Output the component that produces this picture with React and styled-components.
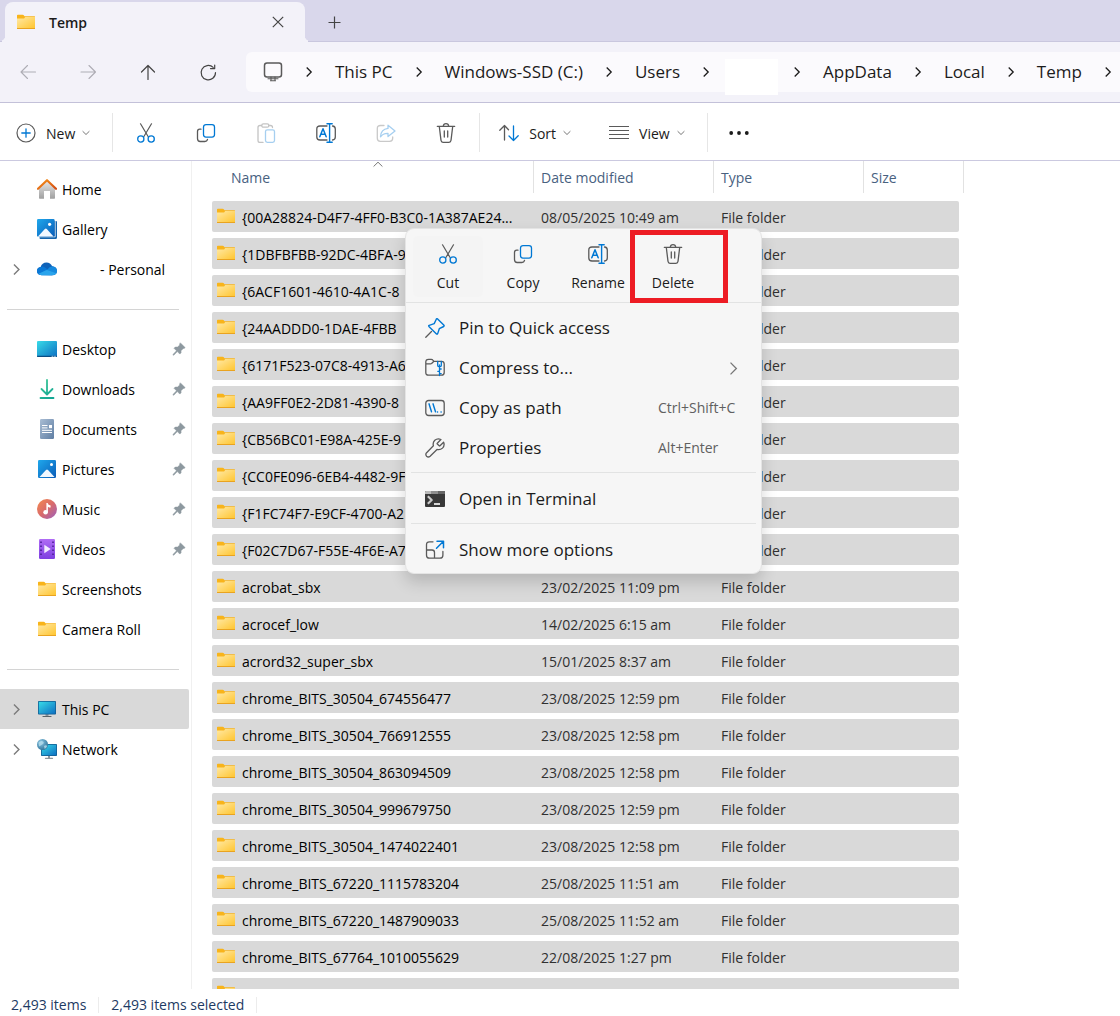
// src/App.jsx
import React, { useState } from 'react';
import styled, { createGlobalStyle, css } from 'styled-components';

const GlobalStyle = createGlobalStyle`
  * {
    box-sizing: border-box;
  }
  body {
    margin: 0;
    background: #fff;
    color: #1b1b1b;
    font-family: 'Open Sans', 'Noto Sans', sans-serif;
    font-size: 14px;
    line-height: 20px;
  }
  button {
    border: 0;
    padding: 0;
    background: none;
    color: inherit;
    font: inherit;
  }
  svg {
    display: block;
    flex: none;
  }
`;

const GREY = '#5a5a5a';
const BLUE = '#0078d4';

/* ---------- icons ---------- */

const Svg = ({ size = 20, children }) => (
  <svg width={size} height={size} viewBox={`0 0 ${size} ${size}`} fill="none" strokeWidth="1.3" strokeLinecap="round" strokeLinejoin="round" aria-hidden="true">
    {children}
  </svg>
);

const FolderIcon = () => (
  <Svg>
    <path d="M1 3.5q0-.8.8-.8h4.8q.5 0 .9.4l1.1 1.1h10q.4 0 .4.5V8H1z" fill="#f8b41b" />
    <path d="M1 6.4h6.6q.5 0 .9-.5l.7-.9h9.8v11.3H1z" fill="url(#folder)" />
    <path d="M1 16h18v.9H1.5q-.5 0-.5-.5z" fill="#e9a320" />
  </Svg>
);

const HomeIcon = () => (
  <Svg>
    <path d="M2 9.5 10 2l8 7.5V19q0 .7-.7.7H13V12H7v7.7H2.7Q2 19.7 2 19z" fill="url(#homeWall)" />
    <path d="m1 9.8 9-8.6 9 8.6" stroke="url(#homeRoof)" strokeWidth="2.2" />
  </Svg>
);

const GalleryIcon = () => (
  <Svg>
    <path d="M2.5 16.5h14.6V2h1.9q1 0 1 1v15.5q0 1.5-1.5 1.5H3.5q-1 0-1-1z" fill="#1464ad" />
    <path d="M18.2 1v16.8H2" stroke="#fff" strokeWidth=".8" />
    <rect width="17.6" height="17.6" rx="1.2" fill="url(#photo)" />
    <path d="M1 17.4 7.8 10q1-1 2 0l6.7 7.4z" fill="#f2f8ff" />
    <circle cx="12.6" cy="5.3" r="1.6" fill="#fff" />
  </Svg>
);

const CloudIcon = () => (
  <Svg>
    <path d="M4.5 16Q0 15.6 0 11.9 0 8.5 3.6 8 5 3.4 9.5 3.4q4 0 5.7 3.8Q19.4 7.6 20 11.4q0 4.6-4.6 4.8z" fill="#0f62b8" />
    <path d="M3.6 8q2-1 4.4.4l8 6.1-1 1.7H4.5Q0 15.6 0 11.9 0 8.5 3.6 8z" fill="#0a78d6" />
    <path d="M10 11q2.5-3.7 5.2-3.8 4.3.4 4.8 4.4 0 1.8-1 3z" fill="#1589de" />
    <path d="M1.5 14.7 9 11.3q1-.4 2 0l8.5 2.9q-1.1 2-4.1 2H4.5q-1.9-.2-3-1.5z" fill="#2aa4ec" />
  </Svg>
);

const DesktopIcon = () => (
  <Svg>
    <rect y="2" width="20" height="16" rx="1" fill="url(#screen)" />
    <path d="M0 16.7h20v.5q0 .8-.8.8H.8q-.8 0-.8-.8z" fill="#0b4d83" />
    <path d="M15 17.3h1M17.5 17.3h1" stroke="#cde9f8" strokeWidth=".8" />
  </Svg>
);

const DownloadIcon = () => (
  <Svg>
    <path d="M10 1v14M4.5 10 10 15.5 15.5 10M3.5 19h13" stroke="url(#download)" strokeWidth="1.8" />
  </Svg>
);

const DocumentIcon = () => (
  <Svg>
    <rect x="3" width="14" height="20" rx="1.2" fill="url(#doc)" />
    <path d="M5 6.5h5.5M5 8.9h5.5M5 11.3h10M5 13.5h10" stroke="#fff" strokeWidth="1" strokeLinecap="butt" />
    <path d="M12 6h3v3.2h-3z" fill="#fff" />
  </Svg>
);

const PicturesIcon = () => (
  <Svg>
    <rect x="1" y="1" width="18" height="18" rx="1.2" fill="url(#photo)" />
    <path d="M2.5 18 9 11q1-1 2 0l6.5 7z" fill="#f2f8ff" />
    <circle cx="14.5" cy="5.5" r="1.5" fill="#fff" />
  </Svg>
);

const MusicIcon = () => (
  <Svg>
    <circle cx="10" cy="10" r="10" fill="url(#music)" />
    <circle cx="8.6" cy="13.2" r="2.3" fill="#fff" />
    <path d="M9.4 4h1.2q.5 2 3 2.6v2q-1.6 0-2.7-.9v5.5H9.4z" fill="#fff" />
  </Svg>
);

const VideosIcon = () => (
  <Svg>
    <rect x="2" width="16" height="20" rx="1.2" fill="url(#video)" />
    <path d="M4 2.5v16M16 2.5v16" stroke="#4b1f94" strokeWidth="1.6" strokeDasharray="1.6 2.4" strokeLinecap="butt" />
    <path d="M7.3 5.8v8.4l6.4-4.2z" fill="#f3ecff" />
  </Svg>
);

const PcIcon = () => (
  <Svg>
    <path d="M8.5 15h3v2.5h-3z" fill="#8b959c" />
    <rect x="1" y="2" width="18" height="13.5" rx=".8" fill="#125f94" />
    <rect x="1.8" y="2.8" width="16.4" height="11.9" fill="url(#screen)" />
    <path d="M6 17.5h8" stroke="#5a6269" strokeWidth="1.2" />
  </Svg>
);

const NetworkIcon = () => (
  <Svg>
    <rect x="4" y="5" width="16" height="12" rx=".8" fill="#125f94" />
    <rect x="4.8" y="5.8" width="14.4" height="10.4" fill="url(#screen)" />
    <path d="M11 17h2v2h-2z" fill="#8b959c" />
    <path d="M8.5 19.3h7" stroke="#8b959c" />
    <circle cx="5.5" cy="5.5" r="5.5" fill="url(#globe)" />
    <path d="M1.5 3.5Q4 1 6 2.5T4.5 6 2 7.5zM7 7q2-1.5 3.3 0-.8 2.2-2.6 3z" fill="#b5dcec" opacity=".8" />
  </Svg>
);

const PinnedIcon = () => (
  <Svg size={14}>
    <path d="m8.5 1 4.6 4.6-1 .9-.8-.1-2.3 2.4.1 2-1.3 1.3-2.5-2.5L2 13l-1 .2.2-1L4.5 8.8 2 6.3 3.3 5l2.2.1L7.7 3V2z" fill="#8d989f" stroke="#8d989f" strokeWidth=".5" />
  </Svg>
);

const MonitorIcon = () => (
  <Svg>
    <rect x="1.5" y="1" width="17" height="14" rx="2.5" stroke={GREY} strokeWidth="1.5" />
    <path d="M8 15v3M12 15v3M5 16.7h10M7.5 18.7h5" stroke={GREY} strokeWidth="1.1" />
  </Svg>
);

const BackIcon = () => <Svg><path d="M17.5 10h-14M9.5 3.5 3 10l6.5 6.5" stroke="currentColor" strokeWidth="1.1" /></Svg>;
const ForwardIcon = () => <Svg><path d="M3 10h14M11 3.5 17.5 10 11 16.5" stroke="currentColor" strokeWidth="1.1" /></Svg>;
const UpIcon = () => <Svg><path d="M10 17.5v-14M3.5 10 10 3.5 16.5 10" stroke="currentColor" strokeWidth="1.2" /></Svg>;

const RefreshIcon = () => (
  <Svg>
    <path d="M17.5 10.5a7.2 7.2 0 1 1-2.3-5.1M16.7 3v3.6h-4.2" stroke="currentColor" strokeWidth="1.2" />
  </Svg>
);

const ChevronRight = ({ size = 10, thin }) => (
  <svg width={size} height={size} viewBox="0 0 10 10" fill="none" stroke="currentColor" strokeWidth={thin ? 1 : 1.3} aria-hidden="true">
    <path d="m2.7.5 4.5 4.5-4.5 4.5" />
  </svg>
);

const ChevronDown = () => (
  <svg width="8" height="8" viewBox="0 0 8 8" fill="none" stroke="#777" strokeWidth="1" aria-hidden="true">
    <path d="m.6 2.2 3.4 3.3 3.4-3.3" />
  </svg>
);

const NewIcon = () => (
  <Svg>
    <circle cx="10" cy="10" r="9" stroke={GREY} strokeWidth="1.2" />
    <path d="M10 5.8v8.4M5.8 10h8.4" stroke={BLUE} />
  </Svg>
);

const CutIcon = () => (
  <Svg>
    <path d="M4.5.8 12.4 14M15.5.8 7.6 14" stroke={GREY} strokeWidth="1.2" />
    <circle cx="4.8" cy="16" r="3.1" stroke={BLUE} />
    <circle cx="15.2" cy="16" r="3.1" stroke={BLUE} />
  </Svg>
);

const CopyIcon = () => (
  <Svg>
    <path d="M5 6.2H3.7Q1.5 6.2 1.5 8.5v7q0 3 2.7 3h4.6q2.2 0 2.7-2" stroke={GREY} />
    <rect x="7.5" y="1.6" width="11" height="12.5" rx="2.5" stroke={BLUE} />
  </Svg>
);

const PasteIcon = () => (
  <Svg>
    <path d="M5.5 2.5H4Q2 2.5 2 4.5v13q0 2 2 2h3M13 2.5h1.5q2 0 2 2" stroke="#c4c4c4" />
    <rect x="5.8" y=".8" width="7" height="3.4" rx="1.5" stroke="#c4c4c4" />
    <rect x="9.5" y="6.8" width="9" height="12.5" rx="1.8" stroke="#a6cff0" />
  </Svg>
);

const RenameIcon = () => (
  <Svg>
    <path d="M11 3H4Q.8 3 .8 6v8q0 3 3.2 3h7M16.5 3Q19.3 3.2 19.3 6v8q0 2.8-2.8 3" stroke={GREY} />
    <path d="M13.6.8v18.4M11 .8h5.2M11 19.2h5.2" stroke={BLUE} strokeWidth="1.4" />
    <path d="m3.8 13.8 3.2-8 3.2 8M4.9 11.2h4.2" stroke={BLUE} strokeWidth="1.5" />
  </Svg>
);

const ShareIcon = () => (
  <Svg>
    <path d="M8 2.5H4.5Q1.3 2.5 1.3 5.5v9.8q0 3 3 3h9.4q3 0 3-3V14" stroke="#c9c9c9" />
    <path d="M12 2.2 19 8l-7 5.5v-3.2q-5-.2-7.5 3.5.3-7.5 7.5-8.4z" stroke="#a6cff0" />
  </Svg>
);

const TrashIcon = () => (
  <Svg>
    <path d="M1.3 3.3h17.4M3.3 3.5 5 17.3q.2 2 2 2h6q1.8 0 2-2L16.7 3.5M7.3 3q.2-2.3 2.7-2.3T12.7 3M8.3 8v6M11.7 8v6" stroke={GREY} />
  </Svg>
);

const SortIcon = () => (
  <Svg>
    <path d="M5.5 17V2.5M.8 7.2l4.7-4.7 4 4.2" stroke={GREY} />
    <path d="M14.5 3v14.5M10 13l4.5 4.5 4.7-4.7" stroke={BLUE} />
  </Svg>
);

const ViewIcon = () => (
  <Svg>
    <path d="M0 3.5h20M0 7.5h20M0 11.5h20M0 15.5h20" stroke={GREY} strokeWidth="1.2" strokeLinecap="butt" />
  </Svg>
);

const MoreIcon = () => (
  <Svg>
    <circle cx="2.2" cy="10" r="1.9" fill="#1b1b1b" />
    <circle cx="10" cy="10" r="1.9" fill="#1b1b1b" />
    <circle cx="17.8" cy="10" r="1.9" fill="#1b1b1b" />
  </Svg>
);

const PinIcon = () => (
  <Svg>
    <path d="M6.5 13.5.8 19.2" stroke={GREY} />
    <path d="M12.6.9 19 7.3q.5.7-.3 1.2l-4.4 2.2-1.6 4.9q-.4 1-1.2.3L3.9 8.4q-.6-.8.3-1.1l5-1.7L11.3 1.2q.5-.9 1.3-.3z" stroke={BLUE} strokeWidth="1.4" />
  </Svg>
);

const ZipIcon = () => (
  <Svg>
    <path d="M8.5 3.3h8q2.7 0 2.7 2.7v8.5q0 2.7-2.7 2.7h-13q-2.7 0-2.7-2.7V4Q.8 1.3 3.5 1.3h2.8q1 0 1.6.8l1 1.200L6.600 5.500q-.4.3-1 .3H.9" stroke={GREY} />
    <path d="M14.5 7v10.5M12.7 3.5v4q0 1.2 1.8 1.2t1.8-1.2v-4M14.5 11h1.7M12.8 13.3h1.7M14.5 15.6h1.7" stroke={BLUE} />
  </Svg>
);

const PathIcon = () => (
  <Svg>
    <rect x=".8" y="2.5" width="18.4" height="15" rx="2.8" stroke={GREY} />
    <path d="m4 5.8 2.5 8M8 5.8l2.5 8M12.4 14h.2M16 14h.2" stroke={BLUE} strokeWidth="1.4" />
  </Svg>
);

const WrenchIcon = () => (
  <Svg>
    <path d="M18.6 4.2 15 7.8q-.4.4-.8 0L12.3 6q-.4-.4 0-.8l3.6-3.7Q12.5 0 9.8 2.3 7.5 4.6 8.4 7.8L1.6 14.7q-1.5 1.8 0 3.5 1.7 1.6 3.5 0l6.9-6.7q3.2.8 5.5-1.4 2.5-2.6 1.1-5.9z" stroke={GREY} />
  </Svg>
);

const TerminalIcon = () => (
  <Svg>
    <path d="M0 3q0-1 1-1h18q1 0 1 1v14q0 1-1 1H1q-1 0-1-1z" fill="#383838" />
    <path d="M0 3q0-1 1-1h5v3H0z" fill="#b9b9b9" />
    <path d="M6 2h7v3H6z" fill="#8e8e8e" />
    <path d="M13 2h6q1 0 1 1v2h-7z" fill="#666" />
    <path d="m2.8 7.3 3.9 3.7-3.9 3.7" stroke="#ccc" strokeWidth="2.2" strokeLinecap="butt" />
    <path d="M9 15h6" stroke="#fff" strokeWidth="1.6" strokeLinecap="butt" />
  </Svg>
);

const ShowMoreIcon = () => (
  <Svg>
    <path d="M8 1.8H4.5q-3 0-3 3v10.4q0 3 3 3h10.4q3 0 3-3V11.5M1.5 10H7q2.5 0 2.5 2.5v5.7" stroke={GREY} />
    <path d="M12 1.3h6.5v6.5M18 1.8l-6.5 6.5" stroke={BLUE} strokeWidth="1.5" />
  </Svg>
);

const Gradients = () => (
  <svg width="0" height="0" style={{ position: 'absolute' }} aria-hidden="true">
    <defs>
      <linearGradient id="folder" x1="0" y1="0" x2="1" y2="1"><stop stopColor="#ffe9a6" /><stop offset="1" stopColor="#ffc52f" /></linearGradient>
      <linearGradient id="homeWall" x1="0" y1="0" x2="0" y2="1"><stop stopColor="#e8e8e8" /><stop offset="1" stopColor="#9f9f9f" /></linearGradient>
      <linearGradient id="homeRoof" x1="0" y1="0" x2="1" y2="1"><stop stopColor="#f7941b" /><stop offset="1" stopColor="#d24a12" /></linearGradient>
      <linearGradient id="photo" x1="0" y1="0" x2="1" y2="1"><stop stopColor="#1fa8ec" /><stop offset="1" stopColor="#0a5cb8" /></linearGradient>
      <linearGradient id="screen" x1="0" y1="0" x2="1" y2="1"><stop stopColor="#38dbe8" /><stop offset="1" stopColor="#0d6fc2" /></linearGradient>
      <linearGradient id="download" gradientUnits="userSpaceOnUse" x1="4" y1="1" x2="16" y2="19"><stop stopColor="#3cc796" /><stop offset="1" stopColor="#11a594" /></linearGradient>
      <linearGradient id="doc" x1="0" y1="0" x2="1" y2="1"><stop stopColor="#a9bdd4" /><stop offset="1" stopColor="#5f7ea3" /></linearGradient>
      <linearGradient id="music" x1="0" y1="0" x2="1" y2="1"><stop stopColor="#f58a4e" /><stop offset=".5" stopColor="#d96b6b" /><stop offset="1" stopColor="#9a5fc0" /></linearGradient>
      <linearGradient id="video" x1="0" y1="0" x2="0" y2="1"><stop stopColor="#b06cf5" /><stop offset="1" stopColor="#7d3fe0" /></linearGradient>
      <radialGradient id="globe" cx=".35" cy=".3" r=".8"><stop stopColor="#8cc8e4" /><stop offset="1" stopColor="#2a6d94" /></radialGradient>
    </defs>
  </svg>
);

/* ---------- window chrome ---------- */

const Window = styled.div`
  display: flex;
  flex-direction: column;
  height: 100vh;
  overflow: hidden;
`;

const TabBar = styled.header`
  display: flex;
  align-items: flex-end;
  height: 42px;
  padding-left: 5px;
  background: #d9d7eb;
  border-bottom: 1px solid #c9c7de;
`;

const Tab = styled.div`
  position: relative;
  display: flex;
  align-items: center;
  width: 300px;
  height: 40px;
  margin-bottom: -1px;
  padding: 0 17px 0 11px;
  background: #f3f2f9;
  border-radius: 8px 8px 0 0;
  font-weight: 600;

  &::before,
  &::after {
    content: '';
    position: absolute;
    bottom: 1px;
    width: 5px;
    height: 5px;
  }
  &::before {
    right: 100%;
    border-bottom-right-radius: 5px;
    box-shadow: 2px 2px 0 #f3f2f9;
  }
  &::after {
    left: 100%;
    border-bottom-left-radius: 5px;
    box-shadow: -2px 2px 0 #f3f2f9;
  }
`;

const TabTitle = styled.span`
  flex: 1;
  margin-left: 13px;
  padding-top: 2px;
`;

const TabButton = styled.button`
  display: grid;
  place-items: center;
  width: 20px;
  height: 20px;
  color: #444;
`;

const NewTabButton = styled(TabButton)`
  width: 58px;
  height: 38px;
`;

const AddressRow = styled.div`
  display: flex;
  align-items: center;
  height: 61px;
  background: #f3f2f9;
  border-bottom: 1px solid #c3c1d9;
`;

const NavButtons = styled.div`
  display: flex;
  flex: none;
  gap: 20px;
  padding: 0 18px 0 8px;
`;

const IconButton = styled.button`
  display: grid;
  place-items: center;
  width: 40px;
  height: 40px;
  color: ${(p) => (p.$muted ? '#aeadb5' : '#444')};
`;

const Breadcrumbs = styled.nav`
  display: flex;
  flex: 1;
  align-items: center;
  gap: 21px;
  min-width: 0;
  height: 40px;
  padding-left: 17px;
  background: #fbfafd;
  border-radius: 6px 0 0 6px;
  white-space: nowrap;
  font-size: 17px;
  line-height: 24px;
`;

const Crumb = styled.a`
  color: #1b1b1b;
  text-decoration: none;
`;

const BlankCrumb = styled.span`
  align-self: flex-end;
  flex: none;
  width: 53px;
  height: 36px;
  margin: 0 -7px -3px;
  background: #fff;
`;

const Toolbar = styled.div`
  display: flex;
  align-items: center;
  height: 58px;
  padding-top: 2px;
  border-bottom: 1px solid #cbc9e0;
`;

const ToolGroup = styled.div`
  display: flex;
  align-items: center;
  gap: ${(p) => p.$gap || 0}px;
  height: 39px;
  padding: ${(p) => p.$padding};
  border-right: ${(p) => (p.$last ? '0' : '1px solid #e6e6e6')};
`;

const LabelButton = styled.button`
  display: flex;
  align-items: center;
  gap: 10px;

  svg:last-child {
    margin-left: -3px;
  }
`;

const ToolLabel = styled.span`
  padding-top: 2px;
`;

/* ---------- sidebar ---------- */

const Body = styled.div`
  position: relative;
  display: flex;
  flex: 1;
  min-height: 0;
`;

const Sidebar = styled.nav`
  flex: none;
  width: 192px;
  padding-top: 8px;
  border-right: 1px solid #f0f0f0;
`;

const SideLink = styled.a`
  display: flex;
  align-items: center;
  gap: 5px;
  height: 40px;
  margin-right: 2px;
  padding-right: 3px;
  color: #000;
  text-decoration: none;
  border-radius: 0 2px 2px 0;
  background: ${(p) => (p.$active ? '#d9d9d9' : 'none')};
`;

const Expander = styled.span`
  display: grid;
  flex: none;
  place-items: center;
  width: 32px;
  color: #7c7c7c;
`;

const SideLabel = styled.span`
  flex: 1;
  padding-top: 2px;
  padding-left: ${(p) => (p.$indent ? 38 : 0)}px;
  white-space: nowrap;
`;

const SideRule = styled.hr`
  margin: 20px 12px 19px 7px;
  border: 0;
  border-top: 1px solid #d4d4d4;
`;

/* ---------- file list ---------- */

const Content = styled.main`
  flex: 1;
  min-width: 0;
  padding-left: 20px;
  overflow: hidden;
`;

const FileTable = styled.table`
  display: block;
`;

const TableHead = styled.thead`
  display: block;
  margin-bottom: 8px;
`;

const TableBody = styled.tbody`
  display: grid;
  gap: 6px;
`;

const columns = css`
  display: grid;
  grid-template-columns: 322px 180px 150px 100px;
  align-items: center;
`;

const HeadRow = styled.tr`
  ${columns}
`;

const HeadCell = styled.th`
  position: relative;
  height: 32px;
  padding: 1px 0 0 ${(p) => (p.$first ? 19 : 7)}px;
  border-right: 1px solid #e2e2e2;
  color: #48617f;
  font-weight: 400;
  line-height: 32px;
  text-align: left;
`;

const SortMark = styled.svg`
  position: absolute;
  top: 0;
  left: 161px;
`;

const FileRow = styled.tr`
  ${columns}
  width: 747px;
  height: 31px;
  background: #d9d9d9;
  border-radius: 2px;
`;

const FileCell = styled.td`
  padding: 2px 0 0 7px;
  color: #303030;
  white-space: nowrap;
`;

const NameCell = styled(FileCell)`
  display: flex;
  align-items: flex-start;
  gap: 6px;
  height: 22px;
  padding: 0 0 0 4px;
  color: #000;

  span {
    padding-top: 2px;
  }
`;

/* ---------- context menu ---------- */

const Menu = styled.div`
  position: absolute;
  top: 67px;
  left: 405px;
  width: 357px;
  padding-bottom: 3px;
  background: #f6f6f6;
  border: 1px solid #e4e4e4;
  border-radius: 9px;
  box-shadow: 0 8px 16px rgba(0, 0, 0, 0.16);
`;

const MenuActions = styled.div`
  display: flex;
  gap: 5px;
  padding: 7px 0 5px 7px;
  border-bottom: 1px solid #e2e3e3;
  margin-bottom: 5px;
`;

const MenuAction = styled.button`
  position: relative;
  display: flex;
  flex-direction: column;
  align-items: center;
  gap: 9px;
  width: 70px;
  height: 61px;
  padding-top: 8px;
  border-radius: 5px;
  background: ${(p) => (p.$hover ? '#f4f4f4' : 'none')};
`;

const Highlight = styled.span`
  position: absolute;
  top: -6px;
  left: -8px;
  width: 98px;
  height: 73px;
  border: 5px solid #ed1c24;
`;

const MenuItem = styled.button`
  display: flex;
  align-items: center;
  gap: 14px;
  width: 100%;
  height: 40px;
  padding: 0 19px;
  font-size: 17px;
  text-align: left;
  white-space: nowrap;
`;

const MenuLabel = styled.span`
  flex: 1;
`;

const Shortcut = styled.span`
  width: 84px;
  color: #606060;
  font-size: 14px;
`;

const MenuArrow = styled.span`
  margin-right: 2px;
  color: #777;
`;

const MenuRule = styled.hr`
  margin: 4px 5px 6px;
  border: 0;
  border-top: 1px solid #e2e3e3;
`;

/* ---------- status bar ---------- */

const StatusBar = styled.footer`
  display: flex;
  flex: none;
  align-items: center;
  height: 27px;
  padding: 4px 0 0 11px;
  color: #1d3a63;
`;

const StatusText = styled.span`
  height: 16px;
  margin-right: 12px;
  padding-right: 12px;
  border-right: 1px solid #ececec;
  line-height: 16px;
`;

/* ---------- data ---------- */

const crumbsBefore = ['This PC', 'Windows-SSD (C:)', 'Users'];
const crumbsAfter = ['AppData', 'Local', 'Temp'];

const places = [
  { label: 'Home', Icon: HomeIcon },
  { label: 'Gallery', Icon: GalleryIcon },
  { label: '- Personal', Icon: CloudIcon, expand: true, indent: true },
];

const folders = [
  { label: 'Desktop', Icon: DesktopIcon, pinned: true },
  { label: 'Downloads', Icon: DownloadIcon, pinned: true },
  { label: 'Documents', Icon: DocumentIcon, pinned: true },
  { label: 'Pictures', Icon: PicturesIcon, pinned: true },
  { label: 'Music', Icon: MusicIcon, pinned: true },
  { label: 'Videos', Icon: VideosIcon, pinned: true },
  { label: 'Screenshots', Icon: FolderIcon },
  { label: 'Camera Roll', Icon: FolderIcon },
];

const devices = [
  { label: 'This PC', Icon: PcIcon, expand: true },
  { label: 'Network', Icon: NetworkIcon, expand: true },
];

const files = [
  { name: '{00A28824-D4F7-4FF0-B3C0-1A387AE24...', modified: '08/05/2025 10:49 am' },
  { name: '{1DBFBFBB-92DC-4BFA-9' },
  { name: '{6ACF1601-4610-4A1C-8' },
  { name: '{24AADDD0-1DAE-4FBB' },
  { name: '{6171F523-07C8-4913-A6' },
  { name: '{AA9FF0E2-2D81-4390-8' },
  { name: '{CB56BC01-E98A-425E-9' },
  { name: '{CC0FE096-6EB4-4482-9F' },
  { name: '{F1FC74F7-E9CF-4700-A2' },
  { name: '{F02C7D67-F55E-4F6E-A7' },
  { name: 'acrobat_sbx', modified: '23/02/2025 11:09 pm' },
  { name: 'acrocef_low', modified: '14/02/2025 6:15 am' },
  { name: 'acrord32_super_sbx', modified: '15/01/2025 8:37 am' },
  { name: 'chrome_BITS_30504_674556477', modified: '23/08/2025 12:59 pm' },
  { name: 'chrome_BITS_30504_766912555', modified: '23/08/2025 12:58 pm' },
  { name: 'chrome_BITS_30504_863094509', modified: '23/08/2025 12:58 pm' },
  { name: 'chrome_BITS_30504_999679750', modified: '23/08/2025 12:59 pm' },
  { name: 'chrome_BITS_30504_1474022401', modified: '23/08/2025 12:58 pm' },
  { name: 'chrome_BITS_67220_1115783204', modified: '25/08/2025 11:51 am' },
  { name: 'chrome_BITS_67220_1487909033', modified: '25/08/2025 11:52 am' },
  { name: 'chrome_BITS_67764_1010055629', modified: '22/08/2025 1:27 pm' },
  { name: '' },
];

const tools = [
  ['Cut', CutIcon],
  ['Copy', CopyIcon],
  ['Paste', PasteIcon],
  ['Rename', RenameIcon],
  ['Share', ShareIcon],
  ['Delete', TrashIcon],
];

const menuActions = [
  ['Cut', CutIcon],
  ['Copy', CopyIcon],
  ['Rename', RenameIcon],
  ['Delete', TrashIcon],
];

const SideItems = ({ items, active, onSelect }) =>
  items.map(({ label, Icon, expand, pinned, indent }) => (
    <SideLink key={label} href="#" $active={active === label} onClick={() => onSelect(label)}>
      <Expander>{expand && <ChevronRight size={11} />}</Expander>
      <Icon />
      <SideLabel $indent={indent}>{label}</SideLabel>
      {pinned && <PinnedIcon />}
    </SideLink>
  ));

const CrumbItems = ({ names }) =>
  names.map((name) => (
    <React.Fragment key={name}>
      <Crumb href="#">{name}</Crumb>
      <ChevronRight />
    </React.Fragment>
  ));

const ToolMenu = ({ label, Icon }) => (
  <LabelButton>
    <Icon />
    <ToolLabel>{label}</ToolLabel>
    <ChevronDown />
  </LabelButton>
);

const ContextMenu = () => (
  <Menu>
    <MenuActions>
      {menuActions.map(([label, Icon]) => (
        <MenuAction key={label} $hover={label === 'Cut'}>
          <Icon />
          {label}
          {label === 'Delete' && <Highlight />}
        </MenuAction>
      ))}
    </MenuActions>
    <MenuItem>
      <PinIcon />
      <MenuLabel>Pin to Quick access</MenuLabel>
    </MenuItem>
    <MenuItem>
      <ZipIcon />
      <MenuLabel>Compress to...</MenuLabel>
      <MenuArrow><ChevronRight size={13} thin /></MenuArrow>
    </MenuItem>
    <MenuItem>
      <PathIcon />
      <MenuLabel>Copy as path</MenuLabel>
      <Shortcut>Ctrl+Shift+C</Shortcut>
    </MenuItem>
    <MenuItem>
      <WrenchIcon />
      <MenuLabel>Properties</MenuLabel>
      <Shortcut>Alt+Enter</Shortcut>
    </MenuItem>
    <MenuRule />
    <MenuItem>
      <TerminalIcon />
      <MenuLabel>Open in Terminal</MenuLabel>
    </MenuItem>
    <MenuRule />
    <MenuItem>
      <ShowMoreIcon />
      <MenuLabel>Show more options</MenuLabel>
    </MenuItem>
  </Menu>
);

const App = () => {
  const [active, setActive] = useState('This PC');

  return (
    <Window>
      <GlobalStyle />
      <Gradients />
      <TabBar>
        <Tab>
          <FolderIcon />
          <TabTitle>Temp</TabTitle>
          <TabButton aria-label="Close tab">
            <svg width="12" height="12" viewBox="0 0 12 12" stroke="currentColor" strokeWidth="1.2">
              <path d="m.8.8 10.4 10.4M11.2.8.8 11.2" />
            </svg>
          </TabButton>
        </Tab>
        <NewTabButton aria-label="New tab">
          <svg width="13" height="13" viewBox="0 0 13 13" stroke="currentColor" strokeWidth="1.2">
            <path d="M6.5.5v12M.5 6.5h12" />
          </svg>
        </NewTabButton>
      </TabBar>

      <AddressRow>
        <NavButtons>
          <IconButton $muted aria-label="Back"><BackIcon /></IconButton>
          <IconButton $muted aria-label="Forward"><ForwardIcon /></IconButton>
          <IconButton aria-label="Up"><UpIcon /></IconButton>
          <IconButton aria-label="Refresh"><RefreshIcon /></IconButton>
        </NavButtons>
        <Breadcrumbs aria-label="Address">
          <MonitorIcon />
          <ChevronRight />
          <CrumbItems names={crumbsBefore} />
          <BlankCrumb />
          <ChevronRight />
          <CrumbItems names={crumbsAfter} />
        </Breadcrumbs>
      </AddressRow>

      <Toolbar>
        <ToolGroup $padding="0 22px 0 16px">
          <ToolMenu label="New" Icon={NewIcon} />
        </ToolGroup>
        <ToolGroup $gap={20} $padding="0 13px 0 13px">
          {tools.map(([label, Icon]) => (
            <IconButton key={label} aria-label={label}><Icon /></IconButton>
          ))}
        </ToolGroup>
        <ToolGroup $gap={38} $padding="0 22px 0 19px">
          <ToolMenu label="Sort" Icon={SortIcon} />
          <ToolMenu label="View" Icon={ViewIcon} />
        </ToolGroup>
        <ToolGroup $last $padding="0 11px">
          <IconButton aria-label="See more"><MoreIcon /></IconButton>
        </ToolGroup>
      </Toolbar>

      <Body>
        <Sidebar>
          <SideItems items={places} active={active} onSelect={setActive} />
          <SideRule />
          <SideItems items={folders} active={active} onSelect={setActive} />
          <SideRule />
          <SideItems items={devices} active={active} onSelect={setActive} />
        </Sidebar>
        <Content>
          <FileTable>
            <TableHead>
              <HeadRow>
                <HeadCell scope="col" $first>
                  Name
                  <SortMark width="10" height="7" viewBox="0 0 10 7" fill="none" stroke="#777">
                    <path d="M.6 5.5 5 1.2l4.4 4.3" />
                  </SortMark>
                </HeadCell>
                <HeadCell scope="col">Date modified</HeadCell>
                <HeadCell scope="col">Type</HeadCell>
                <HeadCell scope="col">Size</HeadCell>
              </HeadRow>
            </TableHead>
            <TableBody>
              {files.map(({ name, modified }, i) => (
                <FileRow key={i}>
                  <NameCell><FolderIcon /><span>{name}</span></NameCell>
                  <FileCell>{modified}</FileCell>
                  <FileCell>{name && 'File folder'}</FileCell>
                </FileRow>
              ))}
            </TableBody>
          </FileTable>
        </Content>
        <ContextMenu />
      </Body>

      <StatusBar>
        <StatusText>2,493 items</StatusText>
        <StatusText>2,493 items selected</StatusText>
      </StatusBar>
    </Window>
  );
};

export default App;
